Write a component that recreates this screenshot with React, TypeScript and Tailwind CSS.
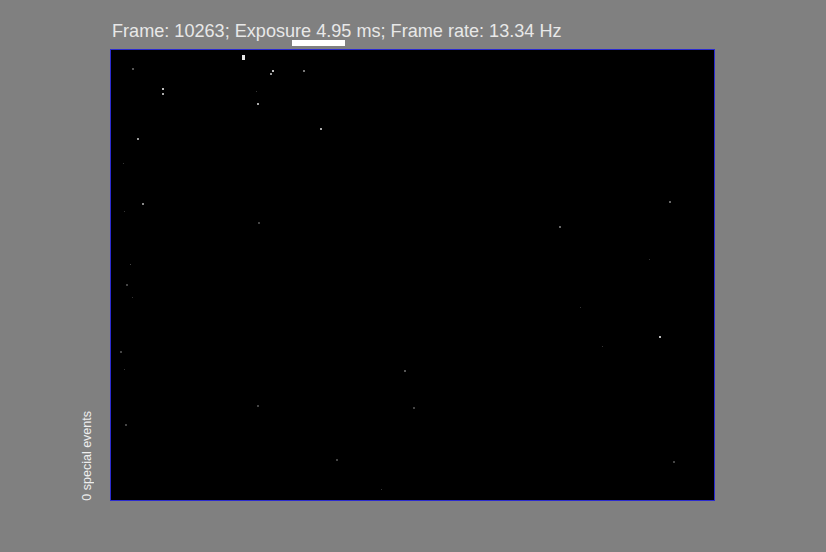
import React from "react";

type Dot = [number, number, number, number, string];

const OX = 111;
const OY = 50;

const dots: Dot[] = [
  [242, 55, 3, 5, "#e6e6e6"],
  [272, 70, 2, 2, "#bdbdbd"],
  [270, 73, 2, 2, "#9a9a9a"],
  [303, 70, 2, 2, "#777777"],
  [132, 68, 2, 2, "#555555"],
  [162, 88, 2, 2, "#bbbbbb"],
  [162, 93, 2, 2, "#aaaaaa"],
  [257, 103, 2, 2, "#aaaaaa"],
  [320, 128, 2, 2, "#aaaaaa"],
  [137, 138, 2, 2, "#999999"],
  [256, 91, 1, 1, "#333333"],
  [142, 203, 2, 2, "#888888"],
  [123, 163, 1, 1, "#333333"],
  [124, 211, 1, 1, "#333333"],
  [258, 222, 2, 2, "#444444"],
  [130, 264, 1, 1, "#444444"],
  [126, 284, 2, 2, "#444444"],
  [132, 297, 1, 1, "#333333"],
  [120, 351, 2, 2, "#444444"],
  [124, 369, 1, 1, "#333333"],
  [404, 370, 2, 2, "#555555"],
  [257, 405, 2, 2, "#444444"],
  [413, 407, 2, 2, "#444444"],
  [125, 424, 2, 2, "#444444"],
  [336, 459, 2, 2, "#444444"],
  [381, 489, 1, 1, "#333333"],
  [669, 201, 2, 2, "#666666"],
  [559, 226, 2, 2, "#666666"],
  [649, 259, 1, 1, "#333333"],
  [580, 307, 1, 1, "#333333"],
  [659, 336, 2, 2, "#bbbbbb"],
  [602, 346, 1, 1, "#333333"],
  [673, 461, 2, 2, "#444444"],
];

export default function App() {
  return (
    <div
      className="w-[826px] h-[552px] bg-[#808080] flex flex-col overflow-hidden"
      style={{ fontFamily: '"Liberation Sans", Arial, sans-serif' }}
    >
      <div className="pt-[22px] pl-[112px] text-[18.1px] leading-[18px] text-[#e8e8e8] whitespace-nowrap">
        Frame: 10263; Exposure 4.95 ms; Frame rate: 13.34 Hz
      </div>
      <div className="ml-[292px] w-[53px] h-[6px] bg-white" />
      <div className="flex flex-row items-end mt-[3px]">
        <div className="w-[110px] flex justify-end pr-[16px]">
          <div className="[writing-mode:vertical-rl] rotate-180 text-[12.5px] leading-[14px] text-[#eeeeee] whitespace-nowrap">
            0 special events
          </div>
        </div>
        <div className="w-[605px] h-[452px] border border-[#2b2bd0] bg-black">
          <svg width="603" height="450" className="block">
            {dots.map(([x, y, w, h, c], i) => (
              <rect key={i} x={x - OX} y={y - OY} width={w} height={h} fill={c} />
            ))}
          </svg>
        </div>
      </div>
    </div>
  );
}
